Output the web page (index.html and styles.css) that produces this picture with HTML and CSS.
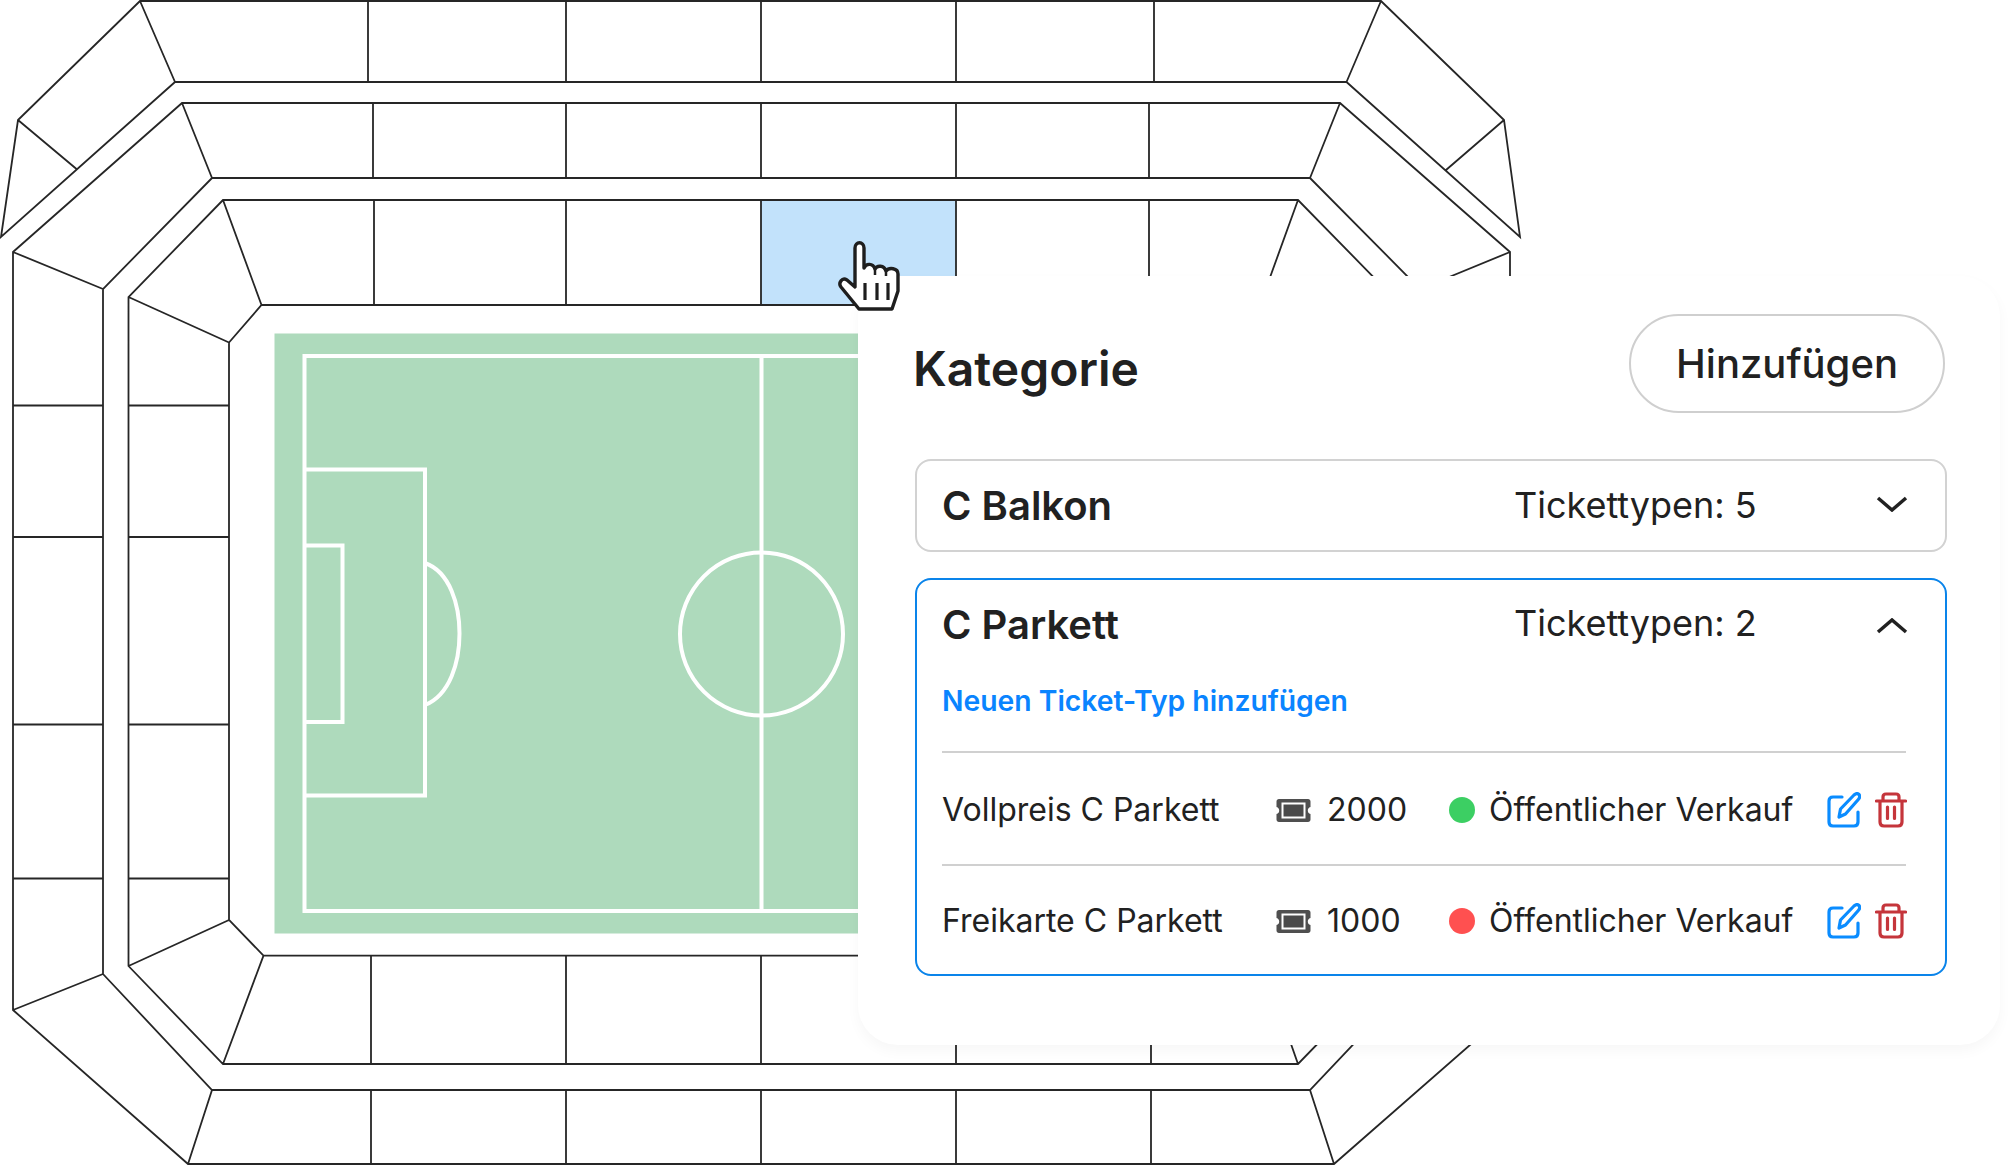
FILE: index.html
```html
<!DOCTYPE html>
<html lang="de">
<head>
<meta charset="utf-8">
<title>Kategorie</title>
<link rel="stylesheet" href="styles.css">
</head>
<body>
<main class="stage">
  <svg class="map" viewBox="0 0 2010 1166" width="2010" height="1166" aria-hidden="true">
    <rect class="cell-on" x="761" y="200" width="195" height="105"/>
    <g class="seat">
      <!-- outer top -->
      <path d="M140 1H1381L1504 120L1520 237L1346.5 82H175L1 237L18 120ZM140 1L175 82M1381 1L1346.5 82M18 120L76.5 169M1504 120L1446 170M368 1V82M566 1V82M761 1V82M956 1V82M1154 1V82"/>
      <!-- middle ring -->
      <path d="M182 103H1340L1510 252V1010L1334 1164H188L13 1010V252ZM212 178H1310L1420 289V974L1310 1090H212L103 974V289ZM182 103L212 178M1340 103L1310 178M13 252L103 289M1510 252L1420 289M13 1010L103 974M1510 1010L1420 974M212 1090L188 1164M1310 1090L1334 1164"/>
      <path d="M373 103V178M566 103V178M761 103V178M956 103V178M1149 103V178M371 1090V1164M566 1090V1164M761 1090V1164M956 1090V1164M1151 1090V1164M13 405.500H103M13 537H103M13 724.500H103M13 878.500H103"/>
      <!-- inner ring -->
      <path d="M223 200H1298L1393 297V966L1298 1064H223L128.5 966V297ZM261.5 305H1260L1292 342V920L1260 955.6H263.5L229 920V342.5ZM223 200L261.5 305M1298 200L1260 305M128.5 297L229 342.5M1393 297L1292 342M128.5 966L229 920M1393 966L1292 920M223 1064L263.5 955.6M1298 1064L1260 955.6"/>
      <path d="M374 200V305M566 200V305M761 200V305M956 200V305M1149 200V305M371 955.6V1064M566 955.6V1064M761 955.6V1064M956 955.6V1064M1151 955.6V1064M128.5 405.500H229M128.5 537H229M128.5 724.500H229M128.5 878.500H229"/>
    </g>
    <rect class="pitch" x="274.500" y="333.500" width="1000" height="600"/>
    <g class="lines">
      <rect x="304.500" y="356" width="900" height="555"/>
      <path d="M761.500 356V911M304.500 469.500H425V795.500H304.500M304.500 545.500H342.500V722H304.500M425 563C450 572 459.500 605 459.500 633.500C459.500 662 450 695 425 705"/>
      <circle cx="761.500" cy="634" r="81.500"/>
    </g>
  </svg>

  <section class="panel">
    <header class="panel-head">
      <h1 class="title">Kategorie</h1>
      <button class="add" type="button">Hinzufügen</button>
    </header>

    <article class="card">
      <div class="card-head">
        <h2 class="name">C Balkon</h2>
        <span class="count">Tickettypen: 5</span>
        <svg class="chev" viewBox="0 0 32 16" width="32" height="16"><path d="M2 2L16 14L30 2"/></svg>
      </div>
    </article>

    <article class="card card-open">
      <div class="card-head">
        <h2 class="name">C Parkett</h2>
        <span class="count count-up">Tickettypen: 2</span>
        <svg class="chev chev-up" viewBox="0 0 32 16" width="32" height="16"><path d="M2 14L16 2L30 14"/></svg>
      </div>
      <a class="link" href="#">Neuen Ticket-Typ hinzufügen</a>

      <div class="row">
        <span class="label">Vollpreis C Parkett</span>
        <svg class="ticket" viewBox="0 0 35 23" width="35" height="23"><use href="#ticket-shape"/></svg>
        <span class="label">2000</span>
        <i class="dot dot-on"></i>
        <span class="label">Öffentlicher Verkauf</span>
        <svg class="edit" viewBox="0 0 34 36" width="34" height="36"><use href="#edit-shape"/></svg>
        <svg class="trash" viewBox="0 0 32 36" width="32" height="36"><use href="#trash-shape"/></svg>
      </div>
      <div class="row row-last">
        <span class="label">Freikarte C Parkett</span>
        <svg class="ticket" viewBox="0 0 35 23" width="35" height="23"><use href="#ticket-shape"/></svg>
        <span class="label">1000</span>
        <i class="dot dot-off"></i>
        <span class="label">Öffentlicher Verkauf</span>
        <svg class="edit" viewBox="0 0 34 36" width="34" height="36"><use href="#edit-shape"/></svg>
        <svg class="trash" viewBox="0 0 32 36" width="32" height="36"><use href="#trash-shape"/></svg>
      </div>
    </article>
  </section>

  <svg class="hand" viewBox="0 0 130 110" width="130" height="110" aria-hidden="true">
    <path class="hand-body" d="M55 76V37C55 30 64 30 64 37V57C66 52 73 52 75 58C77 54 84 54 86 60C89 56 98 57 98 63V80L92 98H59L41 76C38 72 42 66 47 69Z"/>
    <path class="hand-bars" d="M65 72V89M77 72V89M88 72V89"/>
    <path class="hand-gaps" d="M75 58V64M86 60V65"/>
  </svg>

  <svg class="defs" width="0" height="0" aria-hidden="true">
    <defs>
      <g id="ticket-shape">
        <path class="t-fill" d="M3 0H32C33.500 0 34.500 1 34.500 2.500V8C32.500 8.500 31.800 10 31.800 11.500C31.800 13 32.500 14.500 34.500 15V20.500C34.500 22 33.500 23 32 23H3C1.500 23 .5 22 .5 20.500V15C2.500 14.500 3.200 13 3.200 11.500C3.200 10 2.500 8.500 .5 8V2.500C.5 1 1.500 0 3 0Z"/>
        <rect class="t-line" x="6.500" y="4.500" width="22" height="14"/>
      </g>
      <g id="edit-shape">
        <path d="M15 5H6C3.500 5 2 6.500 2 9V30C2 32.500 3.500 34 6 34H27C29.500 34 31 32.500 31 30V20"/>
        <path d="M12 25L13.500 17L27 3C29 1.200 31 1.500 32 2.500C33 3.800 33 5.500 31.500 7.200L18.500 22Z"/>
      </g>
      <g id="trash-shape">
        <path d="M1.500 9H30.500M8 9V5C8 3 9 2 11 2H21C23 2 24 3 24 5V9M5 9V30C5 33 6.500 34 9 34H23C25.500 34 27 33 27 30V9M12.500 15V26.500M19.500 15V26.500"/>
      </g>
    </defs>
  </svg>
</main>
</body>
</html>
```
FILE: styles.css
```css
* { box-sizing: border-box; }
html, body { margin: 0; background: #fff; }
body {
  font-family: Inter, "Noto Sans", sans-serif;
  color: #212121;
  overflow: hidden;
}
.stage {
  position: relative;
  width: 2010px;
  height: 1166px;
  overflow: hidden;
}
.map { position: absolute; left: 0; top: 0; }
.defs { position: absolute; }
.cell-on { fill: #c2e2fb; }
.seat path { fill: none; stroke: #262626; stroke-width: 1.8; stroke-linejoin: miter; }
.pitch { fill: #aedabc; }
.lines rect, .lines path, .lines circle { fill: none; stroke: #fff; stroke-width: 4; }

.panel {
  position: absolute;
  left: 858px;
  top: 276px;
  width: 1142px;
  height: 769px;
  padding: 38px 53px 0 57px;
  background: #fff;
  border-radius: 40px;
  box-shadow: 0 6px 14px rgba(0, 0, 0, .035);
}
.panel-head {
  display: flex;
  align-items: center;
  justify-content: space-between;
  height: 99px;
  margin-bottom: 46px;
}
.title {
  margin: 0 0 -10px -2px;
  font-size: 48px;
  font-weight: 600;
  line-height: 56px;
}
.add {
  width: 316px;
  height: 99px;
  padding-top: 1px;
  margin-right: 2px;
  border: 2px solid #cfcfcf;
  border-radius: 50px;
  background: #fff;
  color: #212121;
  font: 500 40px/48px Inter, "Noto Sans", sans-serif;
}
.card {
  height: 93px;
  padding: 20px 22px 0 25px;
  border: 2px solid #d2d2d2;
  border-radius: 16px;
}
.card-open {
  height: 398px;
  margin-top: 26px;
  border-color: #0a84ea;
}
.card-head {
  display: grid;
  grid-template-columns: 1fr 362px 32px;
  align-items: center;
  height: 50px;
  padding-right: 15px;
}
.name {
  margin: 0;
  font-size: 40px;
  font-weight: 600;
  line-height: 50px;
}
.count { font-size: 36px; line-height: 42px; margin-top: -3px; }
.count-up { margin-top: -5px; }
.chev { margin-top: -4px; }
.chev-up { margin-top: 2px; }
.chev path { fill: none; stroke: #212121; stroke-width: 3.500; stroke-linejoin: miter; }
.link {
  display: block;
  margin: 30px 0 29px;
  color: #0a84ff;
  font-size: 28.300px;
  font-weight: 600;
  line-height: 42px;
  text-decoration: none;
}
.row {
  display: grid;
  grid-template-columns: 334px 51px 122px 40px 338px 48px 32px;
  align-items: center;
  height: 113px;
  padding-top: 3px;
  margin-right: 17px;
  border-top: 2px solid #d0d0d0;
}
.row-last { height: 109px; }
.label { font-size: 32px; line-height: 40px; white-space: nowrap; }
.dot { width: 26px; height: 26px; border-radius: 50%; }
.dot-on { background: #3ccf63; }
.dot-off { background: #ff5050; }
.t-fill { fill: #4f4f4f; }
.t-line { fill: #4a4a4a; stroke: #fff; stroke-width: 2; }
.edit { fill: none; stroke: #0a8cff; stroke-width: 3.200; stroke-linecap: round; stroke-linejoin: round; }
.trash { fill: none; stroke: #c5353b; stroke-width: 3.200; stroke-linecap: round; stroke-linejoin: round; }

.hand { position: absolute; left: 800px; top: 211px; }
.hand-body { fill: #fff; stroke: #1e1e1e; stroke-width: 3.400; stroke-linejoin: round; }
.hand-bars { fill: none; stroke: #1e1e1e; stroke-width: 3.200; }
.hand-gaps { fill: none; stroke: #1e1e1e; stroke-width: 2.500; }
```
